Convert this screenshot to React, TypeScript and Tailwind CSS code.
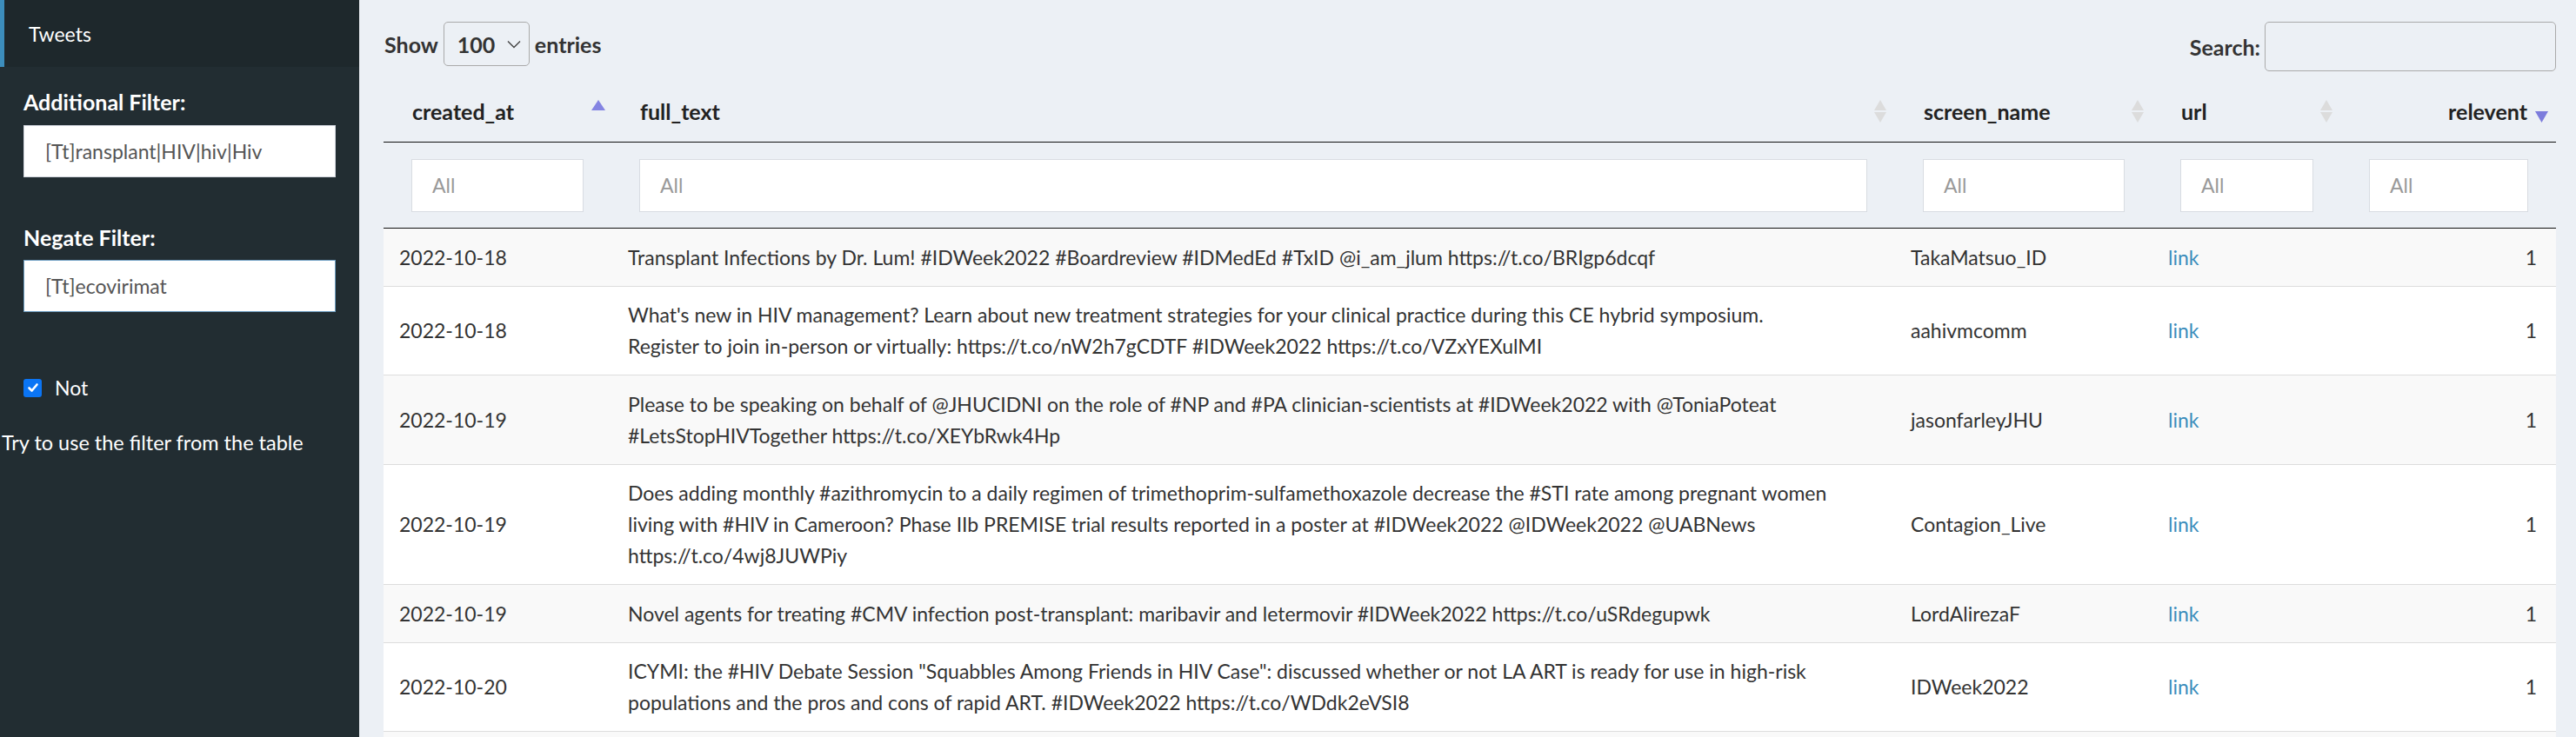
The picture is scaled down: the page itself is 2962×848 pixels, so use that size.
import React from "react";

const rows = [
  { d: "2022-10-18", t: ["Transplant Infections by Dr. Lum! #IDWeek2022 #Boardreview #IDMedEd #TxID @i_am_jlum https://t.co/BRIgp6dcqf"], s: "TakaMatsuo_ID" },
  { d: "2022-10-18", t: ["What's new in HIV management? Learn about new treatment strategies for your clinical practice during this CE hybrid symposium.", "Register to join in-person or virtually: https://t.co/nW2h7gCDTF #IDWeek2022 https://t.co/VZxYEXulMI"], s: "aahivmcomm" },
  { d: "2022-10-19", t: ["Please to be speaking on behalf of @JHUCIDNI on the role of #NP and #PA clinician-scientists at #IDWeek2022 with @ToniaPoteat", "#LetsStopHIVTogether https://t.co/XEYbRwk4Hp"], s: "jasonfarleyJHU" },
  { d: "2022-10-19", t: ["Does adding monthly #azithromycin to a daily regimen of trimethoprim-sulfamethoxazole decrease the #STI rate among pregnant women", "living with #HIV in Cameroon? Phase IIb PREMISE trial results reported in a poster at #IDWeek2022 @IDWeek2022 @UABNews", "https://t.co/4wj8JUWPiy"], s: "Contagion_Live" },
  { d: "2022-10-19", t: ["Novel agents for treating #CMV infection post-transplant: maribavir and letermovir #IDWeek2022 https://t.co/uSRdegupwk"], s: "LordAlirezaF" },
  { d: "2022-10-20", t: ["ICYMI: the #HIV Debate Session \"Squabbles Among Friends in HIV Case\": discussed whether or not LA ART is ready for use in high-risk", "populations and the pros and cons of rapid ART. #IDWeek2022 https://t.co/WDdk2eVSI8"], s: "IDWeek2022" },
];

function SortBoth() {
  return (
    <svg width="14" height="26" viewBox="0 0 14 26" className="absolute right-[10px] top-1/2 -translate-y-1/2">
      <polygon points="7,0 14,12 0,12" fill="#dcdcdc" />
      <polygon points="0,14 14,14 7,26" fill="#dcdcdc" />
    </svg>
  );
}

function SortUp() {
  return (
    <svg width="16" height="26" viewBox="0 0 16 26" className="absolute right-[7px] top-1/2 -translate-y-1/2">
      <polygon points="8,0 16,12 0,12" fill="#8484e2" />
    </svg>
  );
}

function SortDown() {
  return (
    <svg width="15" height="26" viewBox="0 0 15 26" className="absolute right-[9px] top-1/2 -translate-y-1/2">
      <polygon points="0,13 15,13 7.5,26" fill="#7c7cdc" />
    </svg>
  );
}

export default function App() {
  return (
    <div className="flex w-[2962px] h-[848px] overflow-hidden font-['Lato',sans-serif] text-[23px] leading-[36px] text-[#333]">
      <aside className="w-[413px] shrink-0 bg-[#222d32] text-white">
        <div className="h-[77px] bg-[#1e282c] border-l-[5px] border-[#3c8dbc] flex items-center pl-[28px] text-[23px]">
          Tweets
        </div>
        <div className="px-[27px] pt-[22px]">
          <div className="font-bold text-[25px]">Additional Filter:</div>
          <div className="mt-[9px] h-[60px] bg-white border border-[#d2d6de] flex items-center pl-[24px] text-[#555]">
            [Tt]ransplant|HIV|hiv|Hiv
          </div>
          <div className="mt-[51px] font-bold text-[25px]">Negate Filter:</div>
          <div className="mt-[8px] h-[60px] bg-white border border-[#6f9fc2] flex items-center pl-[24px] text-[#555]">
            [Tt]ecovirimat
          </div>
          <div className="mt-[69px] flex items-center h-[36px]">
            <div className="w-[21px] h-[21px] rounded-[3px] bg-[#0b75f5] flex items-center justify-center">
              <svg width="14" height="14" viewBox="0 0 14 14">
                <path d="M2.5 7.5 L5.6 10.5 L11.5 3.5" stroke="white" strokeWidth="2.6" fill="none" strokeLinecap="round" strokeLinejoin="round" />
              </svg>
            </div>
            <span className="ml-[15px]">Not</span>
          </div>
        </div>
        <div className="mt-[27px] pl-[2px] whitespace-nowrap text-[23.5px]">Try to use the filter from the table</div>
      </aside>

      <main className="flex-1 bg-[#ecf0f5] pl-[28px] pr-[23px]">
        <div className="flex justify-between items-start pt-[25px] text-[25px]">
          <div className="flex items-center font-bold pl-px">
            <span>Show</span>
            <div className="ml-[6px] w-[99px] h-[51px] border border-[#aaa] rounded-[5px] flex items-center justify-between pl-[15px] pr-[9px]">
              <span>100</span>
              <svg width="16" height="10" viewBox="0 0 16 10">
                <path d="M1 1.5 L8 8.5 L15 1.5" stroke="#444" strokeWidth="1.4" fill="none" />
              </svg>
            </div>
            <span className="ml-[6px]">entries</span>
          </div>
          <div className="flex items-center font-bold">
            <span>Search:</span>
            <div className="ml-[5px] w-[335px] h-[57px] border border-[#aaa] rounded-[5px]" />
          </div>
        </div>

        <div className="mt-[10px] grid grid-cols-[262px_1476px_296px_217px_247px] h-[72px] items-center border-b border-[#111] font-bold text-[25px] text-[#222]">
          <div className="relative h-full flex items-center pl-[33px]">created_at<SortUp /></div>
          <div className="relative h-full flex items-center pl-[33px]">full_text<SortBoth /></div>
          <div className="relative h-full flex items-center pl-[33px]">screen_name<SortBoth /></div>
          <div className="relative h-full flex items-center pl-[33px]">url<SortBoth /></div>
          <div className="relative h-full flex items-center justify-end pr-[33px]">relevent<SortDown /></div>
        </div>

        <div className="grid grid-cols-[262px_1476px_296px_217px_247px] h-[99px] items-center border-b border-[#111]">
          {[0, 1, 2, 3, 4].map((i) => (
            <div key={i} className="px-[32px]">
              <div className="h-[61px] bg-white border border-[#d8dce2] flex items-center pl-[23px] text-[#999]">All</div>
            </div>
          ))}
        </div>

        {rows.map((r, i) => (
          <div
            key={i}
            className={
              "grid grid-cols-[262px_1476px_296px_217px_247px] items-center border-b border-[#ddd] " +
              (i % 2 === 0 ? "bg-[#f9f9f9]" : "bg-white")
            }
          >
            <div className="pl-[18px] py-[14.75px]">{r.d}</div>
            <div className="pl-[19px] py-[14.75px] whitespace-nowrap">
              {r.t.map((l, j) => (
                <div key={j}>{l}</div>
              ))}
            </div>
            <div className="pl-[18px] py-[14.75px]">{r.s}</div>
            <div className="pl-[18px] py-[14.75px] text-[#3c8dbc]">link</div>
            <div className="pr-[22px] py-[14.75px] text-right">1</div>
          </div>
        ))}
        <div className="h-[66px] bg-[#f9f9f9] border-b border-[#ddd]" />
      </main>
    </div>
  );
}
